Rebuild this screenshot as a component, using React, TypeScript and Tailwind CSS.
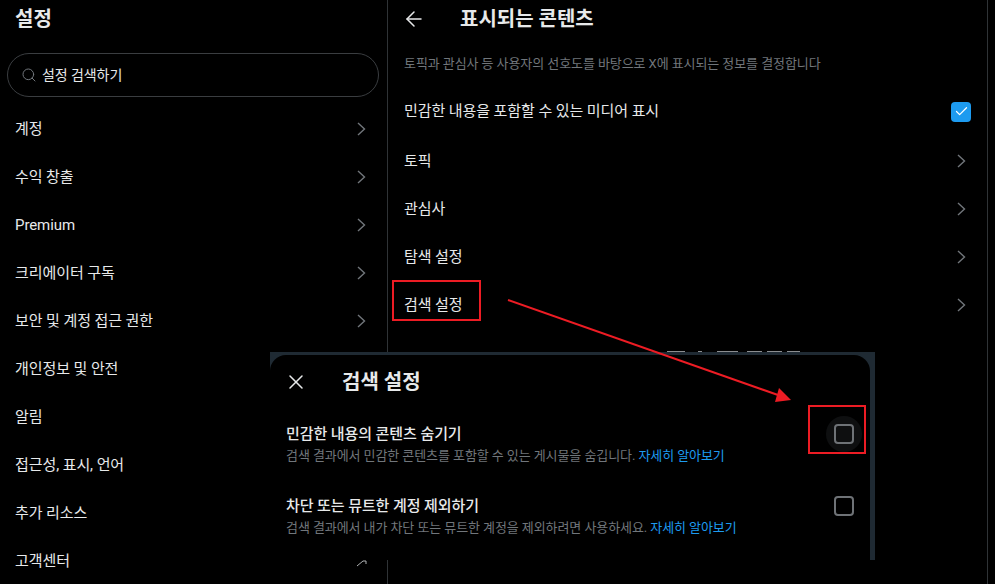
import { Check, Search, ArrowLeft, X } from "lucide-react";

const sideItems = [
	"계정",
	"수익 창출",
	"Premium",
	"크리에이터 구독",
	"보안 및 계정 접근 권한",
	"개인정보 및 안전",
	"알림",
	"접근성, 표시, 언어",
	"추가 리소스",
	"고객센터",
];

const contentItems = ["토픽", "관심사", "탐색 설정", "검색 설정"];

const font = "font-['Roboto','Noto_Sans_CJK_KR',sans-serif]";

const Chevron = () => (
	<svg width="9" height="14" viewBox="0 0 9 14" fill="none" className="text-[#71767b]">
		<path d="M1 1L7.5 7L1 13" stroke="currentColor" strokeWidth="1.4" />
	</svg>
);

const Row = ({ label, chevron = true }: { label: string; chevron?: boolean }) => (
	<div className="flex h-12 items-center justify-between pr-[21px]">
		<span className="text-[15px] text-[#e7e9ea]">{label}</span>
		{chevron && <Chevron />}
	</div>
);

const Box = ({ halo = false }: { halo?: boolean }) => (
	<div className={`-mt-[7px] flex h-9 w-9 shrink-0 items-center justify-center rounded-full ${halo ? "bg-[#0e0f10]" : ""}`}>
		<div className="h-5 w-5 rounded-[4px] border-2 border-[#6e7276]" />
	</div>
);

export default function App() {
	return (
		<div className={`relative flex h-[584px] w-[995px] overflow-hidden bg-black tracking-[-0.08px] ${font}`}>
			{/* Menú lateral */}
			<aside className="w-[388px] shrink-0 border-r border-[#2f3336]">
				<div className="flex h-[37px] items-center pl-[15px]">
					<h2 className="text-[20px] font-bold tracking-normal text-[#e7e9ea]">설정</h2>
				</div>
				<div className="ml-[7px] mt-4 flex h-[44px] w-[372px] items-center gap-[5px] rounded-full border border-[#3a3d40] pl-[13px]">
					<Search className="h-4 w-4 text-[#71767b]" strokeWidth={1.5} />
					<span className="text-[14px] text-[#e7e9ea]">설정 검색하기</span>
				</div>
				<div className="mt-2 pl-[15px]">
					{sideItems.map((item, i) => (
						<Row key={item} label={item} chevron={i < sideItems.length - 1} />
					))}
				</div>
			</aside>

			{/* Contenido */}
			<main className="w-[600px] shrink-0 border-r border-[#2f3336]">
				<div className="flex h-[37px] items-center pl-[14px]">
					<ArrowLeft className="h-6 w-6 text-[#e7e9ea]" strokeWidth={1.5} />
					<h2 className="ml-[34px] text-[20px] font-bold tracking-normal text-[#e7e9ea]">표시되는 콘텐츠</h2>
				</div>
				<p className="mt-[18px] pl-4 text-[13px] leading-[18px] text-[#71767b]">
					토픽과 관심사 등 사용자의 선호도를 바탕으로 X에 표시되는 정보를 결정합니다
				</p>
				<div className="mt-[13px] pl-4">
					<div className="flex h-[51px] items-center justify-between pr-[16px]">
						<span className="text-[15px] text-[#e7e9ea]">민감한 내용을 포함할 수 있는 미디어 표시</span>
						<div className="flex h-5 w-5 items-center justify-center rounded-[4px] bg-[#1d9bf0]">
							<Check className="h-[15px] w-[15px] text-white" strokeWidth={2} />
						</div>
					</div>
					{contentItems.map((item) => (
						<Row key={item} label={item} />
					))}
				</div>
			</main>

			{/* Restos de la página detrás del modal */}
			<div className="absolute left-[667px] top-[351px] flex h-[1px]">
				<div className="w-[18px] bg-[#8a8d90]" />
				<div className="ml-[13px] w-1 bg-[#8a8d90]" />
				<div className="ml-[15px] w-[21px] bg-[#8a8d90]" />
				<div className="ml-[9px] w-[15px] bg-[#8a8d90]" />
				<div className="ml-[5px] w-[15px] bg-[#8a8d90]" />
				<div className="ml-[5px] w-[13px] bg-[#8a8d90]" />
			</div>
			<div className="absolute left-[871px] top-[385px] h-3 w-1 bg-[#55585b]" />
			<svg className="absolute left-[355px] top-[558px]" width="14" height="10" viewBox="0 0 14 10" fill="none">
				<path d="M2 8L8 3H11V6" stroke="#b0b3b5" strokeWidth="1" />
			</svg>

			{/* Modal */}
			<div className="absolute left-[270px] top-[352px] h-[208px] w-[605px] bg-[#1f2a33] pr-[5px] pt-[3px]">
				<div className="h-full rounded-t-2xl bg-black">
					<div className="flex h-[53px] items-center pl-[14px]">
						<X className="h-6 w-6 text-[#e7e9ea]" strokeWidth={1.5} />
						<h3 className="ml-[34px] text-[20px] font-bold tracking-normal text-[#e7e9ea]">검색 설정</h3>
					</div>
					<div className="flex h-[72px] items-start justify-between pl-4 pr-2 pt-[15px]">
						<div>
							<p className="text-[15px] font-medium leading-[22px] text-[#e7e9ea]">민감한 내용의 콘텐츠 숨기기</p>
							<p className="text-[13px] leading-[22px] text-[#71767b]">
								검색 결과에서 민감한 콘텐츠를 포함할 수 있는 게시물을 숨깁니다.{" "}
								<span className="text-[#1d9bf0]">자세히 알아보기</span>
							</p>
						</div>
						<Box halo />
					</div>
					<div className="flex h-[72px] items-start justify-between pl-4 pr-2 pt-[15px]">
						<div>
							<p className="text-[15px] font-medium leading-[22px] text-[#e7e9ea]">차단 또는 뮤트한 계정 제외하기</p>
							<p className="text-[13px] leading-[22px] text-[#71767b]">
								검색 결과에서 내가 차단 또는 뮤트한 계정을 제외하려면 사용하세요.{" "}
								<span className="text-[#1d9bf0]">자세히 알아보기</span>
							</p>
						</div>
						<Box />
					</div>
				</div>
			</div>

			{/* Anotaciones en rojo */}
			<div className="absolute left-[392px] top-[280px] h-[41px] w-[89px] border-2 border-[#ed1c24]" />
			<div className="absolute left-[808px] top-[405px] h-[49px] w-[58px] border-2 border-[#ed1c24]" />
			<svg className="absolute left-[500px] top-[290px]" width="300" height="120" viewBox="0 0 300 120" fill="none">
				<path d="M8 10L278 105" stroke="#ed1c24" strokeWidth="2" />
				<path d="M291 110L279 98L275 112Z" fill="#ed1c24" />
			</svg>
		</div>
	);
}
